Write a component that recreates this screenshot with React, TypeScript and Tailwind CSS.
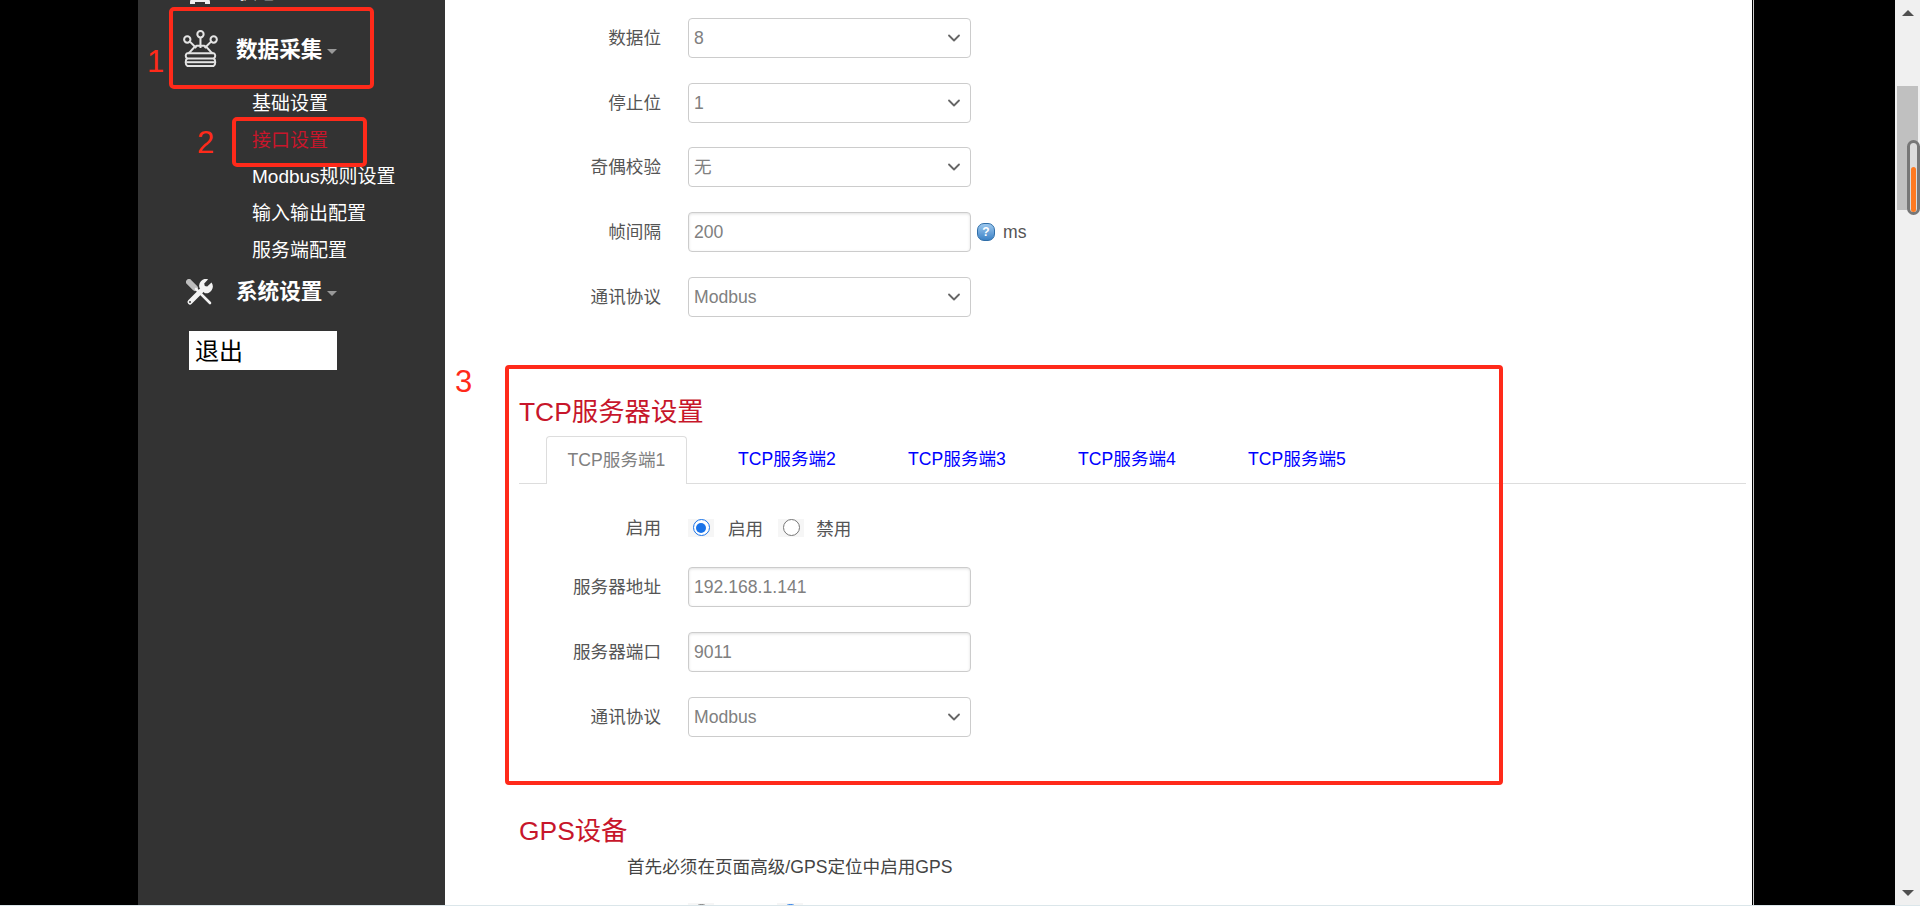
import { ChevronDown } from "lucide-react";

const font = { fontFamily: '"Liberation Sans", "Noto Sans CJK SC", sans-serif' };

function Caret() {
  return (
    <span className="ml-[5px] mt-[2px] h-0 w-0 border-x-[5px] border-t-[5px] border-x-transparent border-t-[#999]"></span>
  );
}

function HomeIcon() {
  return (
    <svg width="36" height="40" viewBox="0 0 36 40">
      <path d="M7 33v-2a3 3 0 0 1 3-3h14a3 3 0 0 1 3 3v2h-5v-2H12v2z" fill="#eee" />
    </svg>
  );
}

function CushionIcon() {
  return (
    <svg width="38" height="38" viewBox="0 0 36 36" fill="none" stroke="#e4e4e4" strokeWidth="1.9" className="ml-[-1px] mt-[-3px]">
      <circle cx="17.5" cy="4" r="3" />
      <circle cx="5" cy="9" r="3" />
      <circle cx="30" cy="9" r="3" />
      <path d="M17.5 7v10M7.5 11l6 6M27.5 11l-6 6" />
      <path d="M6 22c3-1 4-6 8-7h7c4 1 5 6 8 7" />
      <path d="M5 22h25c2 1 2 4 0 5H5c-2-1-2-4 0-5z" />
      <path d="M5 27c-2 1-2 6 0 7h25c2-1 2-6 0-7" />
      <path d="M4 30.5h27" />
    </svg>
  );
}

function ToolsIcon() {
  return (
    <svg width="27" height="27" viewBox="0 0 27 27" fill="none" className="ml-[3px]">
      <path d="M3 3l6 6" stroke="#bdbdbd" strokeWidth="6" strokeLinecap="round" />
      <path d="M10 10l14 14" stroke="#f2f2f2" strokeWidth="2.6" strokeLinecap="round" />
      <path d="M4 23L17 10" stroke="#f2f2f2" strokeWidth="5" strokeLinecap="round" />
      <path
        d="M25.5 3.5l-4.3 4-2.4-.6-.6-2.4 4-4.2a6.8 6.8 0 0 0-8.6 8.8l5 5a6.8 6.8 0 0 0 6.9-10.6z"
        fill="#f2f2f2"
      />
      <circle cx="4" cy="23" r="1" fill="#333" />
    </svg>
  );
}

function NavHead({ icon, label }: { icon: React.ReactNode; label: string }) {
  return (
    <div className="flex h-[40px] items-center pl-[45px]">
      <div className="flex w-[53px] flex-none items-center">{icon}</div>
      <span className="text-[21.6px] font-bold text-white">{label}</span>
      <Caret />
    </div>
  );
}

function Sidebar() {
  const subItems = ["基础设置", "接口设置", "Modbus规则设置", "输入输出配置", "服务端配置"];
  return (
    <aside className="w-[307px] flex-none bg-[#333333]">
      <div className="mt-[-29px]">
        <NavHead icon={<HomeIcon />} label="状态" />
      </div>
      <div className="mt-[19px]">
        <NavHead icon={<CushionIcon />} label="数据采集" />
      </div>
      <ul className="mt-[16px] pl-[114px]">
        {subItems.map((item) => (
          <li
            key={item}
            className={
              item === "接口设置"
                ? "flex h-[36.7px] items-center text-[19px] text-[#c7162b]"
                : "flex h-[36.7px] items-center text-[19px] text-white"
            }
          >
            {item}
          </li>
        ))}
      </ul>
      <div className="mt-[3px]">
        <NavHead icon={<ToolsIcon />} label="系统设置" />
      </div>
      <button className="ml-[51px] mt-[19px] block h-[39px] w-[148px] bg-white pl-[6px] pt-[2px] text-left text-[24px] text-black">
        退出
      </button>
    </aside>
  );
}

function Label({ children }: { children: string }) {
  return <label className="w-[216px] flex-none text-right text-[17.6px] text-[#555]">{children}</label>;
}

function SelectRow({ label, value, className }: { label: string; value: string; className: string }) {
  return (
    <div className={"flex items-center " + className}>
      <Label>{label}</Label>
      <div className="ml-[27px] flex h-[40px] w-[283px] items-center justify-between rounded-[4px] border border-[#ccc] bg-white pl-[5px] pr-[6px] text-[17.6px] text-[#808080]">
        <span>{value}</span>
        <ChevronDown size={20} strokeWidth={2.2} className="text-[#666]" />
      </div>
    </div>
  );
}

function InputRow({ label, value, className }: { label: string; value: string; className: string }) {
  return (
    <div className={"flex items-center " + className}>
      <Label>{label}</Label>
      <div className="ml-[27px] flex h-[40px] w-[283px] items-center rounded-[4px] border border-[#ccc] bg-white pl-[5px] text-[17.6px] text-[#808080] shadow-[inset_0_1px_3px_rgba(0,0,0,0.12)]">
        {value}
      </div>
    </div>
  );
}

function Radio({ checked }: { checked?: boolean }) {
  return (
    <span className="flex h-[18px] w-[26px] flex-none items-center justify-center bg-[#f6f6f6]">
      {checked ? (
        <span className="flex h-[17px] w-[17px] items-center justify-center rounded-full border-[1.5px] border-[#1a73e8] bg-white">
          <span className="h-[10px] w-[10px] rounded-full bg-[#1a73e8]"></span>
        </span>
      ) : (
        <span className="h-[17px] w-[17px] rounded-full border border-[#777] bg-white"></span>
      )}
    </span>
  );
}

function Tabs() {
  return (
    <div className="ml-[74px] mr-[6px] mt-[8px] flex h-[48px] border-b border-[#ddd] pl-[27px]">
      <div className="flex h-[48px] w-[141px] flex-none items-center justify-center rounded-t-[4px] border border-b-0 border-[#ddd] bg-white text-[17.6px] text-[#808080]">
        TCP服务端1
      </div>
      {["TCP服务端2", "TCP服务端3", "TCP服务端4", "TCP服务端5"].map((tab) => (
        <a key={tab} className="ml-[30px] flex h-[47px] w-[140px] flex-none items-center justify-center text-[17.6px] text-[#0000ff]">
          {tab}
        </a>
      ))}
    </div>
  );
}

function MainPanel() {
  return (
    <main className="w-[1307px] flex-none bg-white">
      <SelectRow label="数据位" value="8" className="mt-[18px]" />
      <SelectRow label="停止位" value="1" className="mt-[25px]" />
      <SelectRow label="奇偶校验" value="无" className="mt-[24px]" />
      <div className="mt-[25px] flex items-center">
        <Label>帧间隔</Label>
        <div className="ml-[27px] flex h-[40px] w-[283px] items-center rounded-[4px] border border-[#ccc] bg-white pl-[5px] text-[17.6px] text-[#808080] shadow-[inset_0_1px_3px_rgba(0,0,0,0.12)]">
          200
        </div>
        <span className="ml-[6px] flex h-[18px] w-[18px] items-center justify-center rounded-[7px] border border-[#2f6ea8] bg-gradient-to-b from-[#9cc8ee] to-[#3b82c6] text-[12px] font-bold leading-none text-white">
          ?
        </span>
        <span className="ml-[8px] text-[17.6px] text-[#555]">ms</span>
      </div>
      <SelectRow label="通讯协议" value="Modbus" className="mt-[25px]" />

      <h2 className="ml-[74px] mt-[79px] h-[32px] text-[26.4px] leading-[32px] text-[#c7162b]">TCP服务器设置</h2>
      <Tabs />
      <div className="mt-[24px] flex h-[40px] items-center">
        <Label>启用</Label>
        <div className="ml-[27px] flex items-center text-[17.6px] text-[#555]">
          <Radio checked />
          <span className="ml-[14px] mt-[3px]">启用</span>
          <span className="ml-[15px]">
            <Radio />
          </span>
          <span className="ml-[12px] mt-[3px]">禁用</span>
        </div>
      </div>
      <InputRow label="服务器地址" value="192.168.1.141" className="mt-[19px]" />
      <InputRow label="服务器端口" value="9011" className="mt-[25px]" />
      <SelectRow label="通讯协议" value="Modbus" className="mt-[25px]" />

      <h2 className="ml-[74px] mt-[78px] h-[32px] text-[26.4px] leading-[32px] text-[#c7162b]">GPS设备</h2>
      <p className="ml-[182px] mt-[8px] h-[24px] text-[17.6px] leading-[24px] text-[#444]">
        首先必须在页面高级/GPS定位中启用GPS
      </p>
      <div className="ml-[243px] mt-[24px] flex">
        <Radio />
        <span className="ml-[63px]">
          <Radio checked />
        </span>
      </div>
    </main>
  );
}

function Scrollbar() {
  return (
    <div className="flex w-[25px] flex-none flex-col items-center justify-between bg-[#f0f0f0] pb-[9px] pt-[10px]">
      <span className="h-0 w-0 border-x-[6px] border-b-[6px] border-x-transparent border-b-[#505050]"></span>
      <span className="h-0 w-0 border-x-[6px] border-t-[6px] border-x-transparent border-t-[#505050]"></span>
    </div>
  );
}

// red markers drawn on top of the screenshot
function Annotations() {
  return (
    <>
      <div className="absolute left-[169px] top-[7px] h-[82px] w-[205px] rounded-[5px] border-[4px] border-[#ff2a1a]"></div>
      <div className="absolute left-[232px] top-[117px] h-[50px] w-[135px] rounded-[5px] border-[4px] border-[#ff2a1a]"></div>
      <div className="absolute left-[505px] top-[365px] h-[420px] w-[998px] rounded-[4px] border-[4px] border-[#ff2a1a]"></div>
      <span className="absolute left-[147px] top-[44px] text-[31px] leading-[36px] text-[#ff2a1a]">1</span>
      <span className="absolute left-[197px] top-[125px] text-[31px] leading-[36px] text-[#ff2a1a]">2</span>
      <span className="absolute left-[455px] top-[364px] text-[31px] leading-[36px] text-[#ff2a1a]">3</span>
      <div className="absolute left-[1897px] top-[86px] h-[124px] w-[21px] bg-[#c0c0c0]"></div>
      <div className="absolute left-[1907px] top-[140px] h-[75px] w-[13px] rounded-full border-[3px] border-[#777] bg-[#dcdcdc]">
        <div className="absolute bottom-0 left-[1px] h-[45px] w-[5px] rounded-full bg-[#ff7a20]"></div>
      </div>
    </>
  );
}

export default function App() {
  return (
    <div
      className="relative flex h-[906px] w-full overflow-hidden border-b border-[#dbe6ea] bg-black"
      style={font}
    >
      <div className="w-[138px] flex-none bg-black"></div>
      <Sidebar />
      <MainPanel />
      <div className="w-px flex-none bg-black"></div>
      <div className="w-px flex-none bg-[#ccc]"></div>
      <div className="flex-1 bg-black"></div>
      <Scrollbar />
      <Annotations />
    </div>
  );
}
